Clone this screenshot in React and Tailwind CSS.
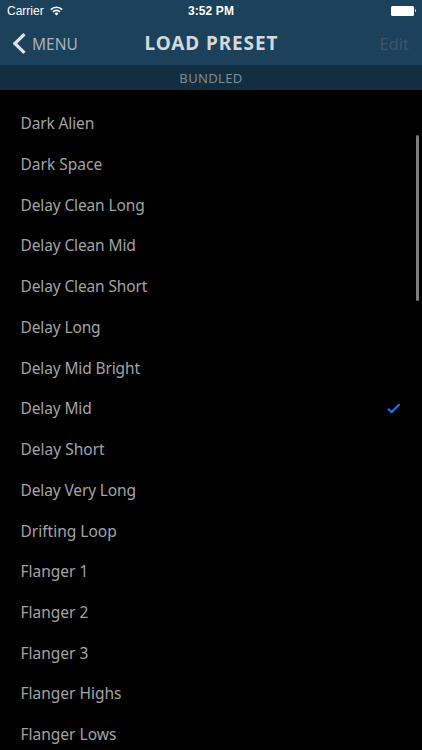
import { useState } from "react";
import clsx from "clsx";

const presets = [
  { name: "Dark Alien", tight: true },
  { name: "Dark Space" },
  { name: "Delay Clean Long", tight: true },
  { name: "Delay Clean Mid", tight: true },
  { name: "Delay Clean Short", tight: true },
  { name: "Delay Long", tight: true },
  { name: "Delay Mid Bright", tight: true },
  { name: "Delay Mid", tight: true },
  { name: "Delay Short" },
  { name: "Delay Very Long", tight: true },
  { name: "Drifting Loop" },
  { name: "Flanger 1" },
  { name: "Flanger 2" },
  { name: "Flanger 3" },
  { name: "Flanger Highs" },
  { name: "Flanger Lows" },
];

const StatusBar = () => (
  <div className="relative flex h-[22px] items-center justify-between pl-[7px] pr-[6px] font-['Liberation_Sans',sans-serif] text-[12px] text-white">
    <div className="flex items-center gap-[6px]">
      <span>Carrier</span>
      <svg width="13" height="10" viewBox="0 0 13 10" fill="none" stroke="white">
        <path d="M0.8 3.6a8.1 8.1 0 0 1 11.4 0" strokeWidth="1.7" />
        <path d="M2.9 5.9a5.1 5.1 0 0 1 7.2 0" strokeWidth="1.6" />
        <path d="M6.5 9.6 4.5 7.5a2.9 2.9 0 0 1 4 0Z" fill="white" stroke="none" />
      </svg>
    </div>
    <span className="absolute inset-x-0 text-center font-bold tracking-[0.1px]">
      3:52 PM
    </span>
    <div className="flex items-center pb-px">
      <div className="h-[10px] w-[23px] rounded-[1.5px] bg-white" />
      <div className="ml-[0.5px] h-[3px] w-[1.5px] rounded-r-sm bg-[#d5dce1]" />
    </div>
  </div>
);

const NavBar = () => (
  <div className="relative flex h-[43px] items-center justify-between px-[13px]">
    <button className="flex items-center gap-[6px] text-[15.5px] text-[#a9b1b8]">
      <svg width="13" height="22" viewBox="0 0 13 22" fill="none">
        <path d="M11.5 1.2 1.9 10.5l9.6 9.3" stroke="#dfe3e7" strokeWidth="3.2" />
      </svg>
      <span className="pt-[2px]">MENU</span>
    </button>
    <h1 className="pointer-events-none absolute inset-x-0 top-[7px] pl-px text-center text-[19px] leading-[28px] font-bold tracking-[0.9px] text-[#d3d8dc]">
      LOAD PRESET
    </h1>
    <button className="text-[16px] tracking-[0.2px] text-[#3c5668]">Edit</button>
  </div>
);

const App = () => {
  const [selected, setSelected] = useState("Delay Mid");

  return (
    <div className="relative flex h-[750px] w-[422px] flex-col overflow-hidden bg-black font-['Noto_Sans',sans-serif]">
      <header className="shrink-0 bg-[#1c415a]">
        <StatusBar />
        <NavBar />
        <div className="flex h-[25px] items-center justify-center bg-[#132e40] pt-[2px] text-[13px] tracking-[0.35px] text-[#7f8c96]">
          BUNDLED
        </div>
      </header>
      <ul className="pt-[13.6px]">
        {presets.map(({ name, tight }) => (
          <li
            key={name}
            onClick={() => setSelected(name)}
            className={clsx(
              "flex h-[40.72px] items-center justify-between pl-[20.5px] pr-[21px] text-[15.5px] text-[#a3a3a3]",
              tight && "tracking-[-0.13px]"
            )}
          >
            <span>{name}</span>
            {name === selected && (
              <svg width="14" height="11" viewBox="0 0 14 11" fill="none">
                <path d="m1 5.8 3.6 3.2 8-7.8" stroke="#1679e6" strokeWidth="2.1" />
              </svg>
            )}
          </li>
        ))}
      </ul>
      {/* scroll indicator */}
      <div className="absolute right-[3px] top-[135px] h-[166px] w-[3px] rounded-full bg-[#7d7d7d]" />
    </div>
  );
};

export default App;
